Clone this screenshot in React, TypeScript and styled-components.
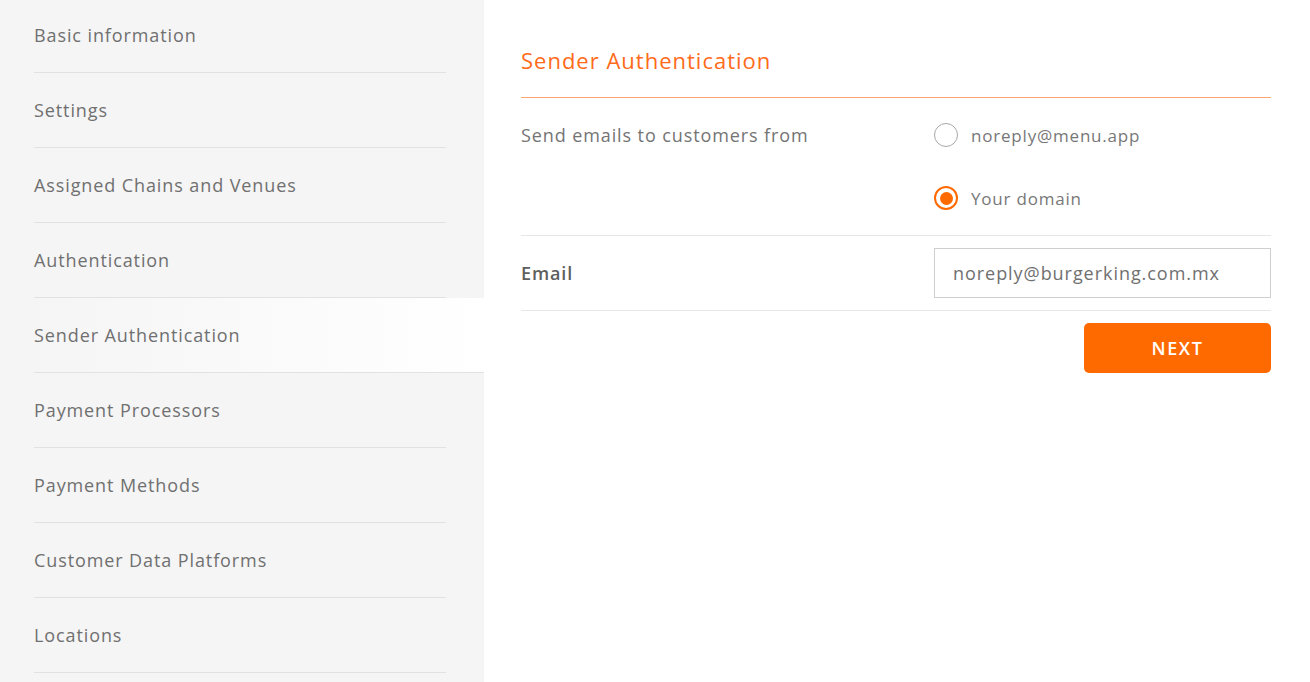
import React from "react";
import styled, { createGlobalStyle } from "styled-components";

const Global = createGlobalStyle`
  html, body { margin: 0; padding: 0; background: #fff; }
  body { font-family: "Open Sans", "Noto Sans", sans-serif; }
  * { box-sizing: border-box; }
`;

const Page = styled.div`
  display: flex;
  width: 1310px;
  height: 682px;
  overflow: hidden;
`;

const Sidebar = styled.nav`
  width: 484px;
  flex: none;
  background: #f5f5f5;
  overflow: hidden;
`;

const NavList = styled.ul`
  list-style: none;
  margin: -2px 0 0 0;
  padding: 0;
`;

const NavItem = styled.li<{ $active?: boolean }>`
  height: 75px;
  margin-left: 34px;
  margin-right: ${(p) => (p.$active ? "0" : "38px")};
  display: flex;
  align-items: center;
  font-size: 18px;
  letter-spacing: 0.9px;
  color: #707070;
  border-bottom: 1px solid #e2e2e2;
  background: ${(p) =>
    p.$active ? "linear-gradient(to right, #f5f5f5 0%, #ffffff 100%)" : "transparent"};
`;

const Main = styled.main`
  flex: 1;
  padding: 0 39px 0 37px;
  background: #fff;
`;

const Header = styled.h2`
  margin: 0;
  padding: 47px 0 24px;
  font-size: 22px;
  line-height: 26px;
  font-weight: 400;
  letter-spacing: 1px;
  color: #ff6b1a;
`;

const AccentRule = styled.div`
  height: 1px;
  background: #ffa46e;
`;

const Row = styled.div<{ $pad: number }>`
  display: grid;
  grid-template-columns: 413px 1fr;
  align-items: ${(p) => (p.$pad === 12 ? "center" : "start")};
  padding: ${(p) => p.$pad}px 0;
  border-bottom: 1px solid #e6e6e6;
`;

const Label = styled.div<{ $strong?: boolean }>`
  font-size: 18px;
  line-height: 40px;
  letter-spacing: 0.9px;
  color: ${(p) => (p.$strong ? "#5e5e5e" : "#747474")};
  font-weight: ${(p) => (p.$strong ? 600 : 400)};
`;

const Options = styled.div`
  display: flex;
  flex-direction: column;
  gap: 23px;
`;

const Option = styled.label`
  display: flex;
  align-items: center;
  gap: 13px;
  height: 40px;
  font-size: 17px;
  letter-spacing: 0.8px;
  color: #777;
  cursor: pointer;
`;

const Radio = styled.span<{ $checked?: boolean }>`
  width: 24px;
  height: 24px;
  border-radius: 50%;
  border: ${(p) => (p.$checked ? "2px solid #ff6a00" : "1.5px solid #a8a8a8")};
  display: flex;
  align-items: center;
  justify-content: center;
  flex: none;
  &::after {
    content: "";
    width: 13px;
    height: 13px;
    border-radius: 50%;
    background: ${(p) => (p.$checked ? "#ff6a00" : "transparent")};
  }
`;

const Input = styled.input`
  width: 100%;
  height: 50px;
  border: 1px solid #cfcfcf;
  padding: 0 18px;
  font-family: inherit;
  font-size: 18px;
  letter-spacing: 0.95px;
  color: #707070;
  outline: none;
`;

const Actions = styled.div`
  display: flex;
  justify-content: flex-end;
  padding-top: 12px;
`;

const Button = styled.button`
  width: 187px;
  height: 50px;
  border: none;
  border-radius: 5px;
  background: #ff6a00;
  color: #fff;
  font-family: inherit;
  font-size: 18px;
  font-weight: 600;
  letter-spacing: 1.6px;
  cursor: pointer;
`;

const navItems = [
  "Basic information",
  "Settings",
  "Assigned Chains and Venues",
  "Authentication",
  "Sender Authentication",
  "Payment Processors",
  "Payment Methods",
  "Customer Data Platforms",
  "Locations",
];

export default function App() {
  return (
    <>
      <Global />
      <Page>
        <Sidebar>
          <NavList>
            {navItems.map((t) => (
              <NavItem key={t} $active={t === "Sender Authentication"}>
                {t}
              </NavItem>
            ))}
          </NavList>
        </Sidebar>
        <Main>
          <Header>Sender Authentication</Header>
          <AccentRule />
          <Row $pad={17}>
            <Label>Send emails to customers from</Label>
            <Options>
              <Option>
                <Radio />
                noreply@menu.app
              </Option>
              <Option>
                <Radio $checked />
                Your domain
              </Option>
            </Options>
          </Row>
          <Row $pad={12}>
            <Label $strong>Email</Label>
            <Input defaultValue="noreply@burgerking.com.mx" />
          </Row>
          <Actions>
            <Button>NEXT</Button>
          </Actions>
        </Main>
      </Page>
    </>
  );
}
